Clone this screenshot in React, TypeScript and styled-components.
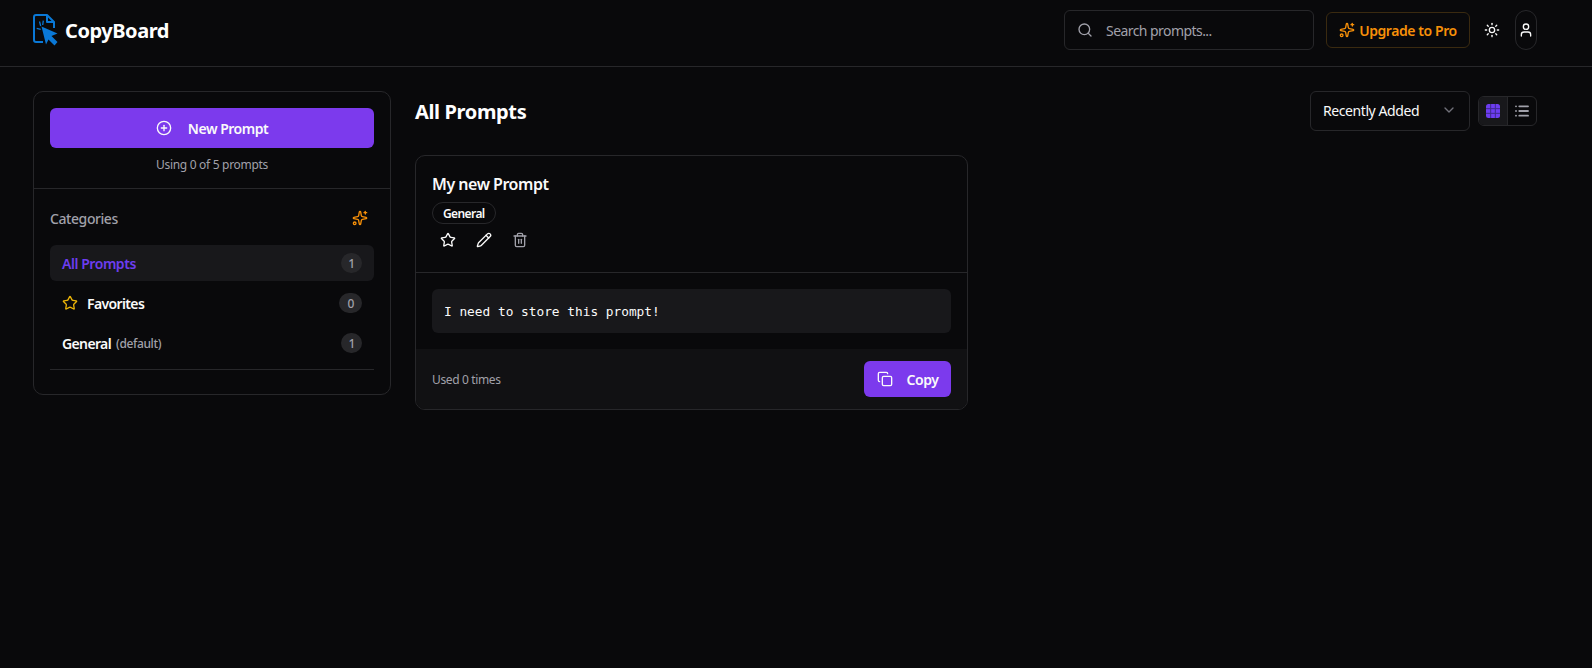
import { createGlobalStyle } from "styled-components";
import styled from "styled-components";
import { ChevronDown, CirclePlus, Copy, List, Pencil, Search, Sparkles, Star, Sun, Trash2, User } from "lucide-react";

const GlobalStyle = createGlobalStyle`
    html, body {
        margin: 0;
        padding: 0;
        min-height: 100vh;
        background-color: #09090b;
    }
    body {
        color: #fafafa;
        font-family: "Noto Sans", "Open Sans", sans-serif;
    }
    * {
        box-sizing: border-box;
    }
`;

const Page = styled.div`
    min-height: 668px;
    background-color: #09090b;
`;

const Header = styled.header`
    height: 67px;
    padding: 10px 55px 0 33px;
    border-bottom: 1px solid #27272a;
    display: flex;
    justify-content: space-between;
    align-items: flex-start;
`;

const Brand = styled.div`
    display: flex;
    align-items: center;
    gap: 7px;
    height: 40px;
    font-size: 20px;
    font-weight: 700;
    letter-spacing: -0.022em;
    color: #ffffff;
`;

const HeaderActions = styled.div`
    display: flex;
    align-items: center;
    gap: 12px;
`;

const SearchBox = styled.div`
    width: 250px;
    height: 40px;
    padding: 0 12px;
    border: 1px solid #27272a;
    border-radius: 6px;
    display: flex;
    align-items: center;
    gap: 13px;
    color: #a1a1aa;
    font-size: 14px;
    letter-spacing: -0.04em;
`;

const UpgradeButton = styled.button`
    width: 144px;
    height: 36px;
    padding: 0;
    border: 1px solid #3a2a10;
    border-radius: 6px;
    background: transparent;
    color: #f79009;
    font: 600 14px "Noto Sans", sans-serif;
    letter-spacing: -0.03em;
    display: flex;
    align-items: center;
    justify-content: center;
    gap: 4px;
`;

const ThemeButton = styled.div`
    width: 22px;
    display: flex;
    justify-content: center;
    color: #fafafa;
    margin-left: -1px;
    margin-right: -10px;
`;

const UserButton = styled.div`
    width: 22px;
    height: 40px;
    margin-left: 10px;
    border: 1px solid #27272a;
    border-radius: 11px;
    display: flex;
    align-items: center;
    justify-content: center;
    color: #fafafa;
`;

const Body = styled.div`
    padding: 24px 55px 0 33px;
    display: flex;
    align-items: flex-start;
    gap: 24px;
`;

const Sidebar = styled.aside`
    width: 358px;
    height: 304px;
    flex-shrink: 0;
    border: 1px solid #27272a;
    border-radius: 10px;
`;

const SidebarTop = styled.div`
    height: 97px;
    padding: 16px 16px 0;
    border-bottom: 1px solid #27272a;
    text-align: center;
`;

const PrimaryButton = styled.button<{ $wide?: boolean }>`
    width: ${(props) => (props.$wide ? "100%" : "87px")};
    height: ${(props) => (props.$wide ? "40px" : "36px")};
    border: 0;
    border-radius: 6px;
    padding: 0;
    background-color: #7c3aed;
    color: #fafafa;
    font: 600 14px "Noto Sans", sans-serif;
    letter-spacing: -0.035em;
    display: flex;
    align-items: center;
    justify-content: center;
    gap: ${(props) => (props.$wide ? "16px" : "14px")};
`;

const UsageText = styled.p`
    margin: 8px 0 0;
    font-size: 12px;
    line-height: 18px;
    letter-spacing: -0.025em;
    color: #a1a1aa;
`;

const SidebarBody = styled.div`
    padding: 16px 16px 0;
`;

const CategoriesHead = styled.div`
    height: 28px;
    padding: 0 6px 2px 0;
    display: flex;
    align-items: center;
    justify-content: space-between;
    color: #a1a1aa;
    font-size: 14px;
    font-weight: 500;
    letter-spacing: -0.03em;
`;

const CategoryList = styled.div`
    margin-top: 12px;
    padding-bottom: 8px;
    border-bottom: 1px solid #27272a;
    display: flex;
    flex-direction: column;
    gap: 4px;
`;

const CategoryRow = styled.div<{ $active?: boolean }>`
    height: 36px;
    padding: 0 12px;
    border-radius: 6px;
    display: flex;
    align-items: center;
    justify-content: space-between;
    background-color: ${(props) => (props.$active ? "#18181b" : "transparent")};
    color: ${(props) => (props.$active ? "#6d3df0" : "#fafafa")};
    font-size: 14px;
    font-weight: 600;
    letter-spacing: ${(props) => (props.$active ? "-0.032em" : "-0.045em")};
`;

const CategoryName = styled.span`
    display: flex;
    align-items: center;
    gap: 9px;
`;

const DefaultNote = styled.span`
    margin-left: -4px;
    font-size: 12px;
    font-weight: 500;
    letter-spacing: -0.03em;
    color: #a1a1aa;
`;

const CountBadge = styled.span<{ $wide?: boolean }>`
    width: ${(props) => (props.$wide ? "23px" : "21px")};
    height: 20px;
    border-radius: 10px;
    background-color: #27272a;
    color: #a1a1aa;
    font-size: 12px;
    font-weight: 500;
    display: flex;
    align-items: center;
    justify-content: center;
`;

const Main = styled.main`
    flex: 1;
`;

const MainHead = styled.div`
    height: 40px;
    display: flex;
    align-items: center;
    justify-content: space-between;
`;

const Title = styled.h1`
    margin: 0;
    font-size: 20px;
    font-weight: 700;
    letter-spacing: -0.018em;
    color: #ffffff;
`;

const Controls = styled.div`
    display: flex;
    align-items: center;
    gap: 8px;
`;

const SortSelect = styled.div`
    width: 160px;
    height: 40px;
    padding: 0 12px 2px;
    border: 1px solid #27272a;
    border-radius: 6px;
    display: flex;
    align-items: center;
    justify-content: space-between;
    font-size: 14px;
    letter-spacing: -0.03em;
    color: #fafafa;
`;

const ViewToggle = styled.div`
    width: 59px;
    height: 30px;
    border: 1px solid #27272a;
    border-radius: 6px;
    display: flex;
    overflow: hidden;
`;

const ViewOption = styled.div<{ $active?: boolean }>`
    flex: 1;
    display: flex;
    align-items: center;
    justify-content: center;
    color: #a1a1aa;
    background-color: ${(props) => (props.$active ? "#18181b" : "transparent")};
    border-right: ${(props) => (props.$active ? "1px solid #27272a" : "0")};
`;

const Card = styled.article`
    width: 553px;
    margin-top: 24px;
    border: 1px solid #27272a;
    border-radius: 10px;
    overflow: hidden;
`;

const CardHead = styled.div`
    height: 117px;
    padding: 16px 16px 0;
    border-bottom: 1px solid #27272a;
`;

const CardTitle = styled.h3`
    margin: 0;
    font-size: 16px;
    line-height: 24px;
    font-weight: 600;
    letter-spacing: -0.03em;
    color: #fafafa;
`;

const Tag = styled.span`
    display: inline-flex;
    margin-top: 6px;
    height: 22px;
    padding: 0 10px;
    align-items: center;
    border: 1px solid #27272a;
    border-radius: 11px;
    font-size: 12px;
    font-weight: 600;
    letter-spacing: -0.05em;
    color: #fafafa;
`;

const CardIcons = styled.div`
    display: flex;
    align-items: center;
    gap: 20px;
    margin-top: 8px;
    padding-left: 8px;
`;

const CardContent = styled.div`
    padding: 16px 16px 16px;
`;

const PromptText = styled.div`
    height: 44px;
    padding: 0 12px;
    border-radius: 6px;
    background-color: #18181b;
    display: flex;
    align-items: center;
    font-family: "DejaVu Sans Mono", monospace;
    font-size: 12.8px;
    color: #fafafa;
`;

const CardFoot = styled.div`
    height: 60px;
    padding: 0 16px;
    background-color: #111113;
    display: flex;
    align-items: center;
    justify-content: space-between;
`;

const UsedText = styled.span`
    font-size: 12px;
    letter-spacing: -0.03em;
    color: #a1a1aa;
`;

export default function App() {
    return (
        <Page>
            <GlobalStyle />
            <Header>
                <Brand>
                    <svg width="25" height="32" viewBox="0 0 25 32" fill="none">
                        <path d="M10 28H3a2 2 0 0 1-2-2V3a2 2 0 0 1 2-2h11l7 7v6" stroke="#0a78d6" strokeWidth="2" strokeLinejoin="round" />
                        <path d="M14 1v7h7" stroke="#0a78d6" strokeWidth="2" strokeLinejoin="round" />
                        <path d="M8.500 12.500l16 7-6 2.500 6 6-3 3.500-6-6-2.500 5z" fill="#0a78d6" />
                        <path d="M6.500 7.500l1.200 4.500M3.700 14.300l4 1M10.300 6.700l-.6 4.300" stroke="#0a78d6" strokeWidth="1.300" />
                    </svg>
                    CopyBoard
                </Brand>
                <HeaderActions>
                    <SearchBox>
                        <Search size={16} />
                        Search prompts...
                    </SearchBox>
                    <UpgradeButton>
                        <Sparkles size={16} />
                        Upgrade to Pro
                    </UpgradeButton>
                    <ThemeButton><Sun size={16} /></ThemeButton>
                    <UserButton><User size={16} /></UserButton>
                </HeaderActions>
            </Header>
            <Body>
                <Sidebar>
                    <SidebarTop>
                        <PrimaryButton $wide>
                            <CirclePlus size={16} />
                            New Prompt
                        </PrimaryButton>
                        <UsageText>Using 0 of 5 prompts</UsageText>
                    </SidebarTop>
                    <SidebarBody>
                        <CategoriesHead>
                            Categories
                            <Sparkles size={16} color="#f79009" />
                        </CategoriesHead>
                        <CategoryList>
                            <CategoryRow $active>
                                <CategoryName>All Prompts</CategoryName>
                                <CountBadge>1</CountBadge>
                            </CategoryRow>
                            <CategoryRow>
                                <CategoryName><Star size={16} color="#eab308" />Favorites</CategoryName>
                                <CountBadge $wide>0</CountBadge>
                            </CategoryRow>
                            <CategoryRow>
                                <CategoryName>General <DefaultNote>(default)</DefaultNote></CategoryName>
                                <CountBadge>1</CountBadge>
                            </CategoryRow>
                        </CategoryList>
                    </SidebarBody>
                </Sidebar>
                <Main>
                    <MainHead>
                        <Title>All Prompts</Title>
                        <Controls>
                            <SortSelect>
                                Recently Added
                                <ChevronDown size={16} color="#71717a" />
                            </SortSelect>
                            <ViewToggle>
                                <ViewOption $active>
                                    <svg width="14" height="14" viewBox="0 0 14 14">
                                        <rect width="14" height="14" rx="2.500" fill="#6d3df0" />
                                        <path d="M4.670 0v14M9.330 0v14M0 4.670h14M0 9.330h14" stroke="#3f2a8c" strokeWidth="1" />
                                    </svg>
                                </ViewOption>
                                <ViewOption><List size={16} strokeWidth={2.8} /></ViewOption>
                            </ViewToggle>
                        </Controls>
                    </MainHead>
                    <Card>
                        <CardHead>
                            <CardTitle>My new Prompt</CardTitle>
                            <Tag>General</Tag>
                            <CardIcons>
                                <Star size={16} color="#fafafa" />
                                <Pencil size={16} color="#fafafa" />
                                <Trash2 size={16} color="#a1a1aa" />
                            </CardIcons>
                        </CardHead>
                        <CardContent>
                            <PromptText>I need to store this prompt!</PromptText>
                        </CardContent>
                        <CardFoot>
                            <UsedText>Used 0 times</UsedText>
                            <PrimaryButton>
                                <Copy size={16} />
                                Copy
                            </PrimaryButton>
                        </CardFoot>
                    </Card>
                </Main>
            </Body>
        </Page>
    );
}
